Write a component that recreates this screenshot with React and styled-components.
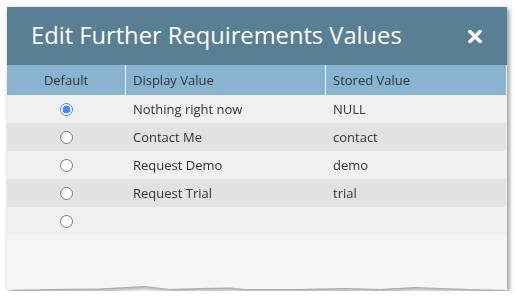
import React from 'react';
import styled, { createGlobalStyle } from 'styled-components';

const GlobalStyle = createGlobalStyle`
  html, body {
    margin: 0;
    padding: 0;
    background: #ffffff;
  }
  body {
    font-family: "Open Sans", "Liberation Sans", sans-serif;
    color: #333333;
  }
`;

const Page = styled.div`
  padding: 7px 0 0 7px;
`;

// drop-shadow follows the torn edge made by the clip-path below
const ShadowWrap = styled.div`
  width: 500px;
  filter: drop-shadow(2px 2px 2.5px rgba(0, 0, 0, 0.45));
`;

const Dialog = styled.div`
  width: 500px;
  height: 284px;
  display: flex;
  flex-direction: column;
  background-color: #f5f5f5;
  clip-path: polygon(
    0 0, 100% 0, 100% 283px,
    463px 282px, 433px 281px, 408px 280px, 373px 282px,
    338px 281px, 293px 282px, 238px 282px, 223px 280.5px,
    193px 281px, 163px 282px, 138px 279px, 93px 281.5px,
    43px 282px, 0 283px
  );
`;

const Header = styled.div`
  height: 58px;
  display: flex;
  align-items: center;
  justify-content: space-between;
  padding: 0 25px 0 24px;
  background-color: #587f94;
  color: #ffffff;
`;

const Title = styled.h1`
  margin: 0;
  font-size: 23.7px;
  font-weight: 400;
  padding-bottom: 2px;
`;

const CloseButton = styled.button`
  border: 0;
  padding: 0;
  background: none;
  display: flex;
  cursor: pointer;
`;

const Table = styled.div`
  display: grid;
  grid-template-columns: 118px 200px 1fr;
  width: 499px;
`;

const HeadCell = styled.div`
  height: 30px;
  display: flex;
  align-items: center;
  justify-content: ${p => (p.$center ? 'center' : 'flex-start')};
  padding-left: ${p => (p.$center ? '0' : '7px')};
  background-color: #88b4cf;
  border-left: ${p => (p.$first ? '0' : '1px solid #ffffff')};
  font-size: 13px;
  color: #333333;
`;

const Cell = styled.div`
  height: 28px;
  display: flex;
  align-items: center;
  justify-content: ${p => (p.$center ? 'center' : 'flex-start')};
  padding-left: ${p => (p.$center ? '0' : '8px')};
  background-color: ${p => (p.$alt ? '#e2e2e2' : '#f0f0f0')};
  font-size: 13px;
  color: #333333;
`;

const Radio = styled.span`
  width: 11px;
  height: 11px;
  border-radius: 50%;
  border: 1px solid ${p => (p.$checked ? '#4a86f7' : '#7a7a7a')};
  background: ${p => (p.$checked
    ? 'radial-gradient(circle, #4a86f7 0 3.6px, #ffffff 4.2px)'
    : '#ffffff')};
  margin-left: 1px;
`;

const rows = [
  { display: 'Nothing right now', stored: 'NULL', checked: true },
  { display: 'Contact Me', stored: 'contact' },
  { display: 'Request Demo', stored: 'demo' },
  { display: 'Request Trial', stored: 'trial' },
  { display: '', stored: '' },
];

const CloseIcon = () => (
  <svg width="14" height="13" viewBox="0 0 14 13">
    <path d="M2 1.5 L12 11.5 M12 1.5 L2 11.5" stroke="#ffffff" strokeWidth="3.4" strokeLinecap="square" />
  </svg>
);

export default function App() {
  return (
    <Page>
      <GlobalStyle />
      <ShadowWrap>
        <Dialog>
          <Header>
            <Title>Edit Further Requirements Values</Title>
            <CloseButton aria-label="Close">
              <CloseIcon />
            </CloseButton>
          </Header>
          <Table>
            <HeadCell $center $first>Default</HeadCell>
            <HeadCell>Display Value</HeadCell>
            <HeadCell>Stored Value</HeadCell>
            {rows.map((r, i) => (
              <React.Fragment key={i}>
                <Cell $center $alt={i % 2 === 1}>
                  <Radio $checked={r.checked} />
                </Cell>
                <Cell $alt={i % 2 === 1}>{r.display}</Cell>
                <Cell $alt={i % 2 === 1}>{r.stored}</Cell>
              </React.Fragment>
            ))}
          </Table>
        </Dialog>
      </ShadowWrap>
    </Page>
  );
}
